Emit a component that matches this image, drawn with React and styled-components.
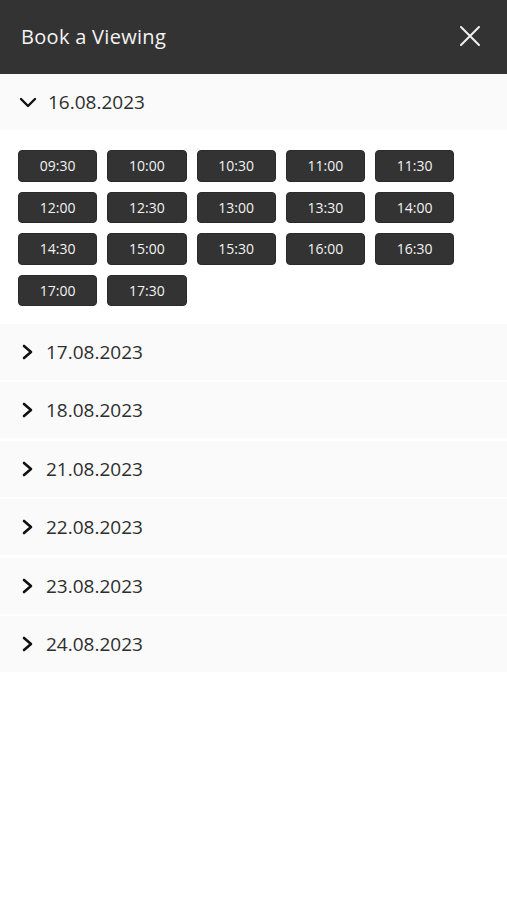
import { useState } from "react";
import styled, { createGlobalStyle } from "styled-components";

const GlobalStyle = createGlobalStyle`
  body { margin: 0; background: #fff; font-family: "Open Sans", "Liberation Sans", sans-serif; }
`;

const dates = [
  "16.08.2023",
  "17.08.2023",
  "18.08.2023",
  "21.08.2023",
  "22.08.2023",
  "23.08.2023",
  "24.08.2023",
];

const slots = [
  "09:30", "10:00", "10:30", "11:00", "11:30",
  "12:00", "12:30", "13:00", "13:30", "14:00",
  "14:30", "15:00", "15:30", "16:00", "16:30",
  "17:00", "17:30",
];

const Header = styled.div`
  height: 74px;
  background: #333333;
  display: flex;
  align-items: center;
  justify-content: space-between;
  padding: 0 26px 2px 21px;
  box-sizing: border-box;
`;

const Title = styled.h1`
  margin: 0;
  color: #f4f4f4;
  font-size: 20px;
  font-weight: 400;
  letter-spacing: 0.3px;
`;

const CloseBtn = styled.button`
  background: none;
  border: none;
  padding: 0;
  display: flex;
  cursor: pointer;
`;

const List = styled.div`
  display: flex;
  flex-direction: column;
  gap: 2.5px;
`;

const DateRow = styled.button`
  height: 56px;
  width: 100%;
  background: #fafafa;
  border: none;
  display: flex;
  align-items: center;
  gap: 10px;
  padding: 0 0 0 ${(p) => (p.open ? "18px" : "20px")};
  font-family: inherit;
  font-size: 19px;
  color: #2e2e2e;
  cursor: pointer;
  text-align: left;
`;

const Slots = styled.div`
  display: grid;
  grid-template-columns: repeat(5, 79.25px);
  gap: 10px;
  padding: 20px 18px 15px;
  background: #fff;
`;

const Slot = styled.button`
  height: 31.5px;
  background: #333333;
  border: 1px solid #2a2a2a;
  border-radius: 4px;
  color: #f2f2f2;
  font-family: inherit;
  font-size: 14px;
  cursor: pointer;
  padding: 0;
`;

const Chevron = ({ open }) =>
  open ? (
    <svg width="20" height="20" viewBox="0 0 20 20" fill="none">
      <path d="M3 7l7 7 7-7" stroke="#111" strokeWidth="2.4" strokeLinecap="round" strokeLinejoin="round" />
    </svg>
  ) : (
    <svg width="16" height="20" viewBox="0 0 16 20" fill="none">
      <path d="M4 4l7 6-7 6" stroke="#111" strokeWidth="2.6" strokeLinecap="round" strokeLinejoin="round" />
    </svg>
  );

export default function App() {
  const [open, setOpen] = useState(0);
  return (
    <>
      <GlobalStyle />
      <Header>
        <Title>Book a Viewing</Title>
        <CloseBtn aria-label="Close">
          <svg width="22" height="22" viewBox="0 0 22 22" fill="none">
            <path d="M2 2l18 18M20 2L2 20" stroke="#f0f0f0" strokeWidth="2" strokeLinecap="round" />
          </svg>
        </CloseBtn>
      </Header>
      <List>
        {dates.map((d, i) => (
          <div key={d}>
            <DateRow open={open === i} onClick={() => setOpen(open === i ? -1 : i)}>
              <Chevron open={open === i} />
              {d}
            </DateRow>
            {open === i && (
              <Slots>
                {slots.map((s) => (
                  <Slot key={s}>{s}</Slot>
                ))}
              </Slots>
            )}
          </div>
        ))}
      </List>
    </>
  );
}
